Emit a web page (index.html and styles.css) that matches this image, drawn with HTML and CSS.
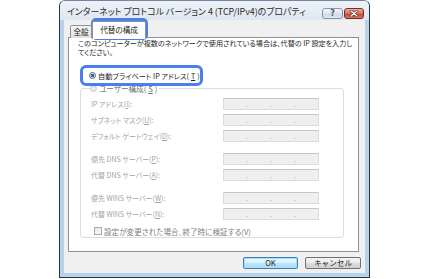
FILE: index.html
```html
<!DOCTYPE html>
<html lang="ja">
<head>
  <meta charset="UTF-8" />
  <title>インターネット プロトコル バージョン 4 (TCP/IPv4)のプロパティ</title>
  <link rel="stylesheet" href="styles.css">
</head>
<body>

  <div class="window">
    <div class="titlebar">
      <span class="title">インターネット プロトコル バージョン 4 (TCP/IPv4)のプロパティ</span>
      <div class="caption-btns">
        <span class="cbtn help">?</span>
        <span class="cbtn close">
          <svg width="10" height="7" viewBox="0 0 10 7">
            <path d="M2 1 L8 6 M8 1 L2 6" stroke="#5a1e18" stroke-width="2.6" stroke-linecap="round"/>
            <path d="M2 1 L8 6 M8 1 L2 6" stroke="#fff" stroke-width="1.4" stroke-linecap="round"/>
          </svg>
        </span>
      </div>
    </div>

    <div class="client">
      <div class="tabs">
        <span class="tab">全般</span>
        <span class="tab active">代替の構成</span>
      </div>

      <div class="page">
        <p class="desc">このコンピューターが複数のネットワークで使用されている場合は、代替の IP 設定を入力し<br>てください。</p>

        <label class="radio-row">
          <span class="radio on"></span>自動プライベート IP アドレス(<u>T</u>)
        </label>

        <fieldset class="group">
          <legend><span class="radio off"></span>ユーザー構成(<u>S</u>)</legend>

          <div class="row"><span class="lbl">IP アドレス(<u>I</u>):</span><span class="ipbox"><b></b><i>.</i><b></b><i>.</i><b></b><i>.</i><b></b></span></div>
          <div class="row"><span class="lbl">サブネット マスク(<u>U</u>):</span><span class="ipbox"><b></b><i>.</i><b></b><i>.</i><b></b><i>.</i><b></b></span></div>
          <div class="row"><span class="lbl">デフォルト ゲートウェイ(<u>D</u>):</span><span class="ipbox"><b></b><i>.</i><b></b><i>.</i><b></b><i>.</i><b></b></span></div>

          <div class="row spaced"><span class="lbl">優先 DNS サーバー(<u>P</u>):</span><span class="ipbox"><b></b><i>.</i><b></b><i>.</i><b></b><i>.</i><b></b></span></div>
          <div class="row"><span class="lbl">代替 DNS サーバー(<u>A</u>):</span><span class="ipbox"><b></b><i>.</i><b></b><i>.</i><b></b><i>.</i><b></b></span></div>

          <div class="row spaced"><span class="lbl">優先 WINS サーバー(<u>W</u>):</span><span class="ipbox"><b></b><i>.</i><b></b><i>.</i><b></b><i>.</i><b></b></span></div>
          <div class="row"><span class="lbl">代替 WINS サーバー(<u>N</u>):</span><span class="ipbox"><b></b><i>.</i><b></b><i>.</i><b></b><i>.</i><b></b></span></div>

          <label class="check-row"><span class="checkbox"></span>設定が変更された場合、終了時に検証する(V)</label>
        </fieldset>
      </div>

      <div class="buttons">
        <button class="btn default">OK</button>
        <button class="btn">キャンセル</button>
      </div>
    </div>
  </div>

  <!-- highlight around the selected tab -->
  <div class="mark mark-tab"></div>

</body>
</html>
```

FILE: styles.css
```css
* {
  box-sizing: border-box;
}

body {
  margin: 0;
  height: 279px;
  overflow: hidden;
  position: relative;
  background: #fff;
  font-family: "Noto Sans CJK JP", "Noto Sans", sans-serif;
  font-feature-settings: "palt";
  color: #1e1e1e;
}

u {
  text-decoration: underline;
  text-underline-offset: 1px;
}

/* window frame */
.window {
  margin-left: 59px;
  width: 311px;
  height: 278px;
  border: 1px solid #1f3a4d;
  border-top-color: #6f86a0;
  border-radius: 6px 6px 0 0;
  background: #b9d1ea;
  display: flex;
  flex-direction: column;
}

.titlebar {
  height: 19px;
  display: flex;
  justify-content: space-between;
  align-items: flex-start;
  padding: 0 5px 0 7px;
  background: linear-gradient(#edf2f7, #dfe8f1);
  border-radius: 5px 5px 0 0;
}

.title {
  margin-top: 5px;
  font-size: 8.9px;
  line-height: 12px;
  color: #2b2b2b;
  white-space: nowrap;
}

.caption-btns {
  display: flex;
  gap: 1px;
  margin-top: 7px;
}

.cbtn {
  height: 11px;
  border-radius: 3px;
  display: flex;
  align-items: center;
  justify-content: center;
}

.help {
  width: 21px;
  border: 1px solid #8295ab;
  background: linear-gradient(#f6f8fb, #dbe4ee 50%, #cdd8e5 51%, #dfe7f0);
  font-family: "DejaVu Sans", sans-serif;
  font-size: 8px;
  font-weight: bold;
  color: #4d5d70;
}

.close {
  width: 20px;
  border: 1px solid #7a2d24;
  background: linear-gradient(#eab0a2, #d56d58 50%, #c2442f 51%, #d8755c);
}

/* client area */
.client {
  flex: 1;
  margin: 0 4px 4px;
  padding: 1px 6px 0 4px;
  background: #f0f0f0;
  display: flex;
  flex-direction: column;
}

.tabs {
  height: 17px;
  display: flex;
  align-items: flex-end;
  padding-left: 2px;
  position: relative;
  z-index: 1;
  font-size: 7.6px;
}

.tab {
  width: 22px;
  height: 13px;
  border: 1px solid #8e9196;
  border-bottom: none;
  border-radius: 2px 2px 0 0;
  background: linear-gradient(#f5f5f5, #e1e1e1);
  display: flex;
  justify-content: center;
  padding-top: 1px;
  line-height: 10px;
}

.tab.active {
  width: 54px;
  height: 18px;
  margin-bottom: -1px;
  background: #fff;
  padding-top: 3px;
}

.page {
  height: 215px;
  margin-top: -1px;
  border: 1px solid #8e9196;
  background: #fff;
  padding: 1px 5px 0 11px;
}

.desc {
  margin: 0 0 8px -2px;
  font-size: 7.1px;
  line-height: 9px;
  white-space: nowrap;
}

.radio-row {
  width: 123px;
  height: 21px;
  border: 3px solid #4a80ee;
  border-radius: 6px;
  background: #fff;
  position: relative;
  z-index: 2;
  display: flex;
  align-items: center;
  gap: 2px;
  padding-left: 6px;
  font-size: 7.2px;
  white-space: nowrap;
}

.radio {
  width: 7px;
  height: 7px;
  border-radius: 50%;
  border: 1px solid #8a96a3;
  background: radial-gradient(#f4f6f8, #d6dce2);
  flex: none;
}

.radio.on {
  background: radial-gradient(circle, #2d5a8e 0, #3c78b8 1.5px, #e9eef3 2.2px);
  border-color: #586878;
}

.radio.off {
  border-color: #c4ccd4;
}

/* group box */
.group {
  margin: -2px 9px 0 0;
  padding: 0 0 1px 10px;
  min-inline-size: 0;
  border: 1px solid #d5dfe5;
  border-radius: 3px;
  height: 154px;
}

.group legend {
  padding: 0 2px 0 0;
  margin-left: -1px;
  display: flex;
  align-items: center;
  gap: 2px;
  font-size: 7.6px;
  line-height: 9px;
  color: #6e6e6e;
}

.row {
  display: flex;
  align-items: center;
  height: 12px;
  margin-top: 4px;
  font-size: 7px;
  color: #a3a3a3;
  white-space: nowrap;
}

.row:first-of-type {
  margin-top: 5px;
}

.row.spaced {
  margin-top: 11px;
}

.lbl {
  width: 132px;
}

.ipbox {
  width: 96px;
  height: 12px;
  display: flex;
  align-items: flex-end;
  padding-bottom: 1px;
  border: 1px solid #dcdcdc;
  border-top-color: #c6c6c6;
  background: #efefef;
}

.ipbox b {
  flex: 1;
}

.ipbox i {
  font-style: normal;
  font-size: 7px;
  line-height: 7px;
  color: #b0b0b0;
}

.check-row {
  display: flex;
  align-items: center;
  gap: 2px;
  height: 10px;
  margin: 6px 0 0 3px;
  font-size: 7.6px;
  color: #808080;
  white-space: nowrap;
}

.checkbox {
  width: 8px;
  height: 8px;
  border: 1px solid #a9a9a9;
  background: linear-gradient(135deg, #e6e6e6, #fbfbfb);
}

/* dialog buttons */
.buttons {
  display: flex;
  justify-content: flex-end;
  gap: 7px;
  margin: 5px -2px 0 0;
}

.btn {
  height: 12px;
  padding: 0;
  font-family: inherit;
  font-size: 7.6px;
  line-height: 10px;
  color: #1e1e1e;
  border: 1px solid #707070;
  border-radius: 2px;
  background: linear-gradient(#f3f3f3, #ebebeb 50%, #dddddd 51%, #cfcfcf);
  width: 56px;
}

.btn.default {
  width: 55px;
  border-color: #3c7fb1;
  background: linear-gradient(#eaf6fd, #d9f0fc 50%, #bee6fd 51%, #a7d9f5);
  box-shadow: inset 0 0 0 1px #a6e0ff;
}

/* annotation outline */
.mark {
  position: absolute;
  border: 3px solid #4a80ee;
  border-radius: 5px;
  pointer-events: none;
}

.mark-tab {
  left: 91px;
  top: 18px;
  width: 57px;
  height: 22px;
}
```
